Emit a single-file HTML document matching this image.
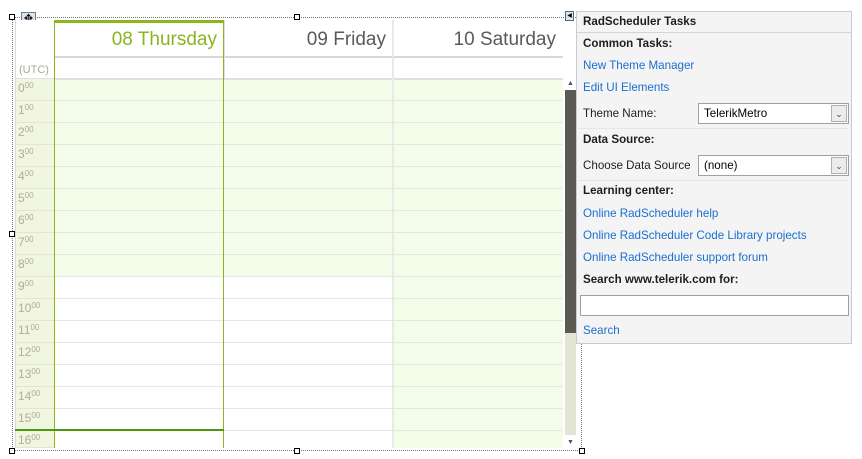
<!DOCTYPE html>
<html><head><style>
*{margin:0;padding:0;box-sizing:border-box}
body{width:862px;height:459px;background:#fff;position:relative;overflow:hidden;font-family:"Liberation Sans",sans-serif}
.a{position:absolute}
.h{width:6px;height:6px;border:1px solid #000;background:#fff;position:absolute}
.tl{position:absolute;left:15px;width:40px;height:22px;color:#b0ad9c;font-size:12px;padding:2px 0 0 3px;border-bottom:1px solid #e4e4dc;background:#f1f6de}
.tl sup{font-size:8px;vertical-align:4px}
.row{position:absolute;left:55px;width:508px;height:22px;border-bottom:1px solid #e6e6e6}
.t{position:absolute;left:583px;font-size:11.6px;color:#1e1e1e;white-space:nowrap}
.b{font-weight:bold}
.l{color:#1a6fd0}
.dd{position:absolute;left:698px;width:151px;height:21px;border:1px solid #a0a0a0;background:#fff;font-size:11.6px;padding:3px 0 0 5px}
.dd i{position:absolute;right:1px;top:1px;width:16px;height:17px;border:1px solid #b0b0b0;background:#ececec;font-style:normal;font-size:9px;text-align:center;line-height:16px;color:#444}
</style></head><body>
<div class="a" style="left:12px;top:17px;width:570px;height:434px;border:1px dotted #777"></div>
<div class="h" style="left:9px;top:14px"></div><div class="h" style="left:294px;top:14px"></div><div class="h" style="left:9px;top:231px"></div>
<div class="h" style="left:9px;top:448px"></div><div class="h" style="left:294px;top:448px"></div><div class="h" style="left:579px;top:448px"></div>
<div class="a" style="left:21px;top:12px;width:15px;height:14px;border:1px solid #6a7a90;background:#dce4f0;font-size:11px;text-align:center;line-height:12px">✥</div>
<div class="a" style="left:15px;top:20px;width:548px;height:428px;background:#fff"></div>
<div class="a" style="left:15px;top:79px;width:40px;height:369px;background:#f1f6de"></div>
<div class="a" style="left:55px;top:79px;width:337px;height:198px;background:#f3fdea"></div>
<div class="a" style="left:393px;top:79px;width:170px;height:369px;background:#f3fdea"></div>
<div class="a" style="left:55px;top:20px;width:169px;height:3px;background:#8ab51e"></div>
<div class="a" style="left:55px;top:56px;width:508px;height:2px;background:#d8d8d8"></div>
<div class="a" style="left:15px;top:78px;width:548px;height:2px;background:#e0e0e0"></div>
<div class="a" style="left:224px;top:20px;width:1px;height:60px;background:#e0e0e0"></div>
<div class="a" style="left:392px;top:20px;width:2px;height:428px;background:#e9e9e9"></div>
<div class="a" style="left:55px;top:29px;width:162px;text-align:right;font-size:19px;color:#8ab51e">08 Thursday</div>
<div class="a" style="left:224px;top:29px;width:162px;text-align:right;font-size:19px;color:#5a5a5a">09 Friday</div>
<div class="a" style="left:393px;top:29px;width:163px;text-align:right;font-size:19px;color:#5a5a5a">10 Saturday</div>
<div class="a" style="left:19px;top:64px;font-size:11px;color:#a8a89a">(UTC)</div>
<div class="row" style="top:79px"></div><div class="row" style="top:101px"></div><div class="row" style="top:123px"></div><div class="row" style="top:145px"></div><div class="row" style="top:167px"></div><div class="row" style="top:189px"></div><div class="row" style="top:211px"></div><div class="row" style="top:233px"></div><div class="row" style="top:255px"></div><div class="row" style="top:277px"></div><div class="row" style="top:299px"></div><div class="row" style="top:321px"></div><div class="row" style="top:343px"></div><div class="row" style="top:365px"></div><div class="row" style="top:387px"></div><div class="row" style="top:409px"></div>
<div class="tl" style="top:79px">0<sup>00</sup></div><div class="tl" style="top:101px">1<sup>00</sup></div><div class="tl" style="top:123px">2<sup>00</sup></div><div class="tl" style="top:145px">3<sup>00</sup></div><div class="tl" style="top:167px">4<sup>00</sup></div><div class="tl" style="top:189px">5<sup>00</sup></div><div class="tl" style="top:211px">6<sup>00</sup></div><div class="tl" style="top:233px">7<sup>00</sup></div><div class="tl" style="top:255px">8<sup>00</sup></div><div class="tl" style="top:277px">9<sup>00</sup></div><div class="tl" style="top:299px">10<sup>00</sup></div><div class="tl" style="top:321px">11<sup>00</sup></div><div class="tl" style="top:343px">12<sup>00</sup></div><div class="tl" style="top:365px">13<sup>00</sup></div><div class="tl" style="top:387px">14<sup>00</sup></div><div class="tl" style="top:409px">15<sup>00</sup></div><div class="tl" style="top:431px;height:17px">16<sup>00</sup></div>
<div class="a" style="left:15px;top:20px;width:1px;height:428px;background:#d8d8d8"></div>
<div class="a" style="left:54px;top:20px;width:1px;height:428px;background:#8ab51e"></div>
<div class="a" style="left:223px;top:20px;width:1px;height:428px;background:#8ab51e"></div>
<div class="a" style="left:15px;top:429px;width:209px;height:2px;background:#4a9a10"></div>
<div class="a" style="left:565px;top:79px;width:11px;height:369px;background:#fff"></div>
<div class="a" style="left:565px;top:90px;width:11px;height:243px;background:#5a5a52"></div>
<div class="a" style="left:565px;top:333px;width:11px;height:102px;background:#e3e5d4"></div>
<div class="a" style="left:567px;top:80px;font-size:7px;color:#555">▲</div>
<div class="a" style="left:567px;top:439px;font-size:7px;color:#555">▼</div>
<div class="a" style="left:565px;top:11px;width:9px;height:10px;border:1px solid #5a6a80;background:#dce4f0;font-size:6px;line-height:8px;text-align:center">◀</div>
<div class="a" style="left:576px;top:11px;width:276px;height:333px;background:#f4f4f4;border:1px solid #cacad6"></div>
<div class="a" style="left:577px;top:32px;width:274px;height:1px;background:#d4d4dc"></div>
<div class="t b" style="top:15px">RadScheduler Tasks</div>
<div class="t b" style="top:37px">Common Tasks:</div>
<div class="t l" style="top:59px">New Theme Manager</div>
<div class="t l" style="top:81px">Edit UI Elements</div>
<div class="t" style="top:107px">Theme Name:</div>
<div class="dd" style="top:103px">TelerikMetro<i>⌄</i></div>
<div class="a" style="left:578px;top:128px;width:270px;height:1px;background:#e6e6e6"></div>
<div class="t b" style="top:133px">Data Source:</div>
<div class="t" style="top:159px">Choose Data Source</div>
<div class="dd" style="top:155px">(none)<i>⌄</i></div>
<div class="a" style="left:578px;top:180px;width:270px;height:1px;background:#e6e6e6"></div>
<div class="t b" style="top:184px">Learning center:</div>
<div class="t l" style="top:207px">Online RadScheduler help</div>
<div class="t l" style="top:229px">Online RadScheduler Code Library projects</div>
<div class="t l" style="top:251px">Online RadScheduler support forum</div>
<div class="t b" style="top:273px">Search www.telerik.com for:</div>
<div class="a" style="left:580px;top:295px;width:269px;height:21px;border:1px solid #a0a0a0;background:#fff"></div>
<div class="t l" style="top:324px">Search</div>
</body></html>
